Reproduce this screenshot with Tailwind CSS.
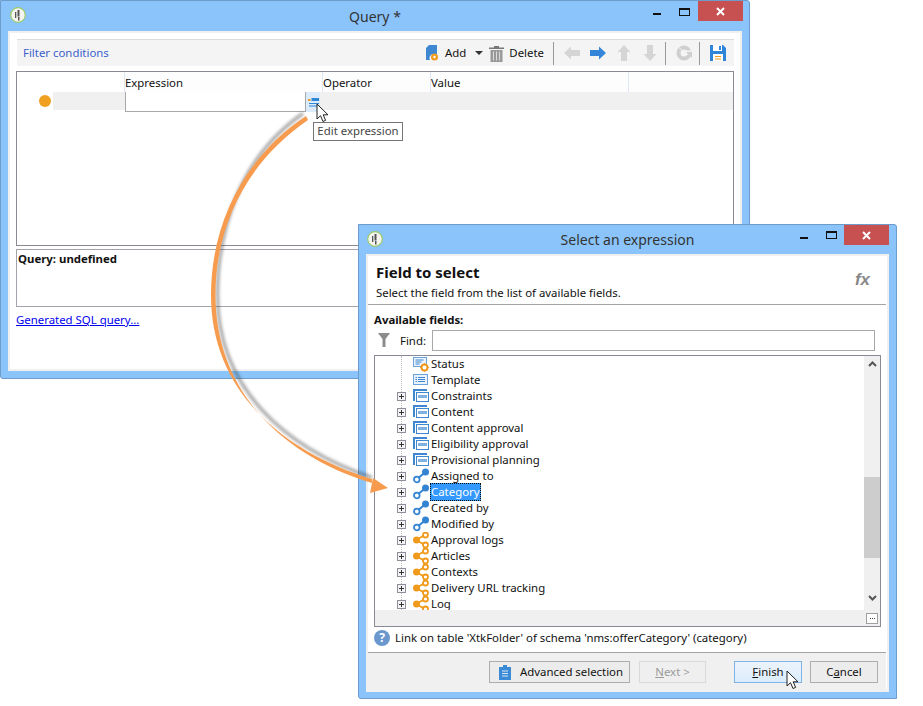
<!DOCTYPE html>
<html lang="en">
<head>
    <meta charset="UTF-8">
    <script src="https://cdn.jsdelivr.net/npm/@tailwindcss/browser@4"></script>
    <title>Query</title>
</head>
<body>
    <svg class="hidden">
        <symbol id="app" viewBox="0 0 16 16">
            <circle cx="8" cy="8" r="7.300" fill="#f4f4f0" stroke="#9ccb6a" stroke-width="1.200"/>
            <path d="M7.500 3h2v6.500h-2zM5 5h1.300v6H5zM8 10h1.500v3.500H8z" fill="#555"/>
        </symbol>
        <symbol id="cursor" viewBox="0 0 13 20">
            <path d="M1 1v15l3.500-3.300L7 18.500l2.600-1.100L7.200 11.800H12z" fill="#fff" stroke="#222" stroke-width="1"/>
        </symbol>
        <symbol id="plus" viewBox="0 0 9 9">
            <rect x=".5" y=".5" width="8" height="8" fill="#f3f3f6" stroke="#8e8f9a"/>
            <path d="M2 4.500h5M4.500 2v5" stroke="#333" fill="none"/>
        </symbol>
        <symbol id="node" viewBox="0 0 16 16">
            <path d="M1 13V2h13" fill="none" stroke="#3f87d0" stroke-width="2"/>
            <rect x="3.500" y="4.500" width="12" height="9" fill="#fff" stroke="#3f87d0"/>
            <rect x="5" y="7" width="9" height="3" fill="#7fb0e2"/>
        </symbol>
        <symbol id="list" viewBox="0 0 16 16">
            <rect x=".5" y="2.500" width="14" height="10" fill="#eaf3fc" stroke="#6ba4dc"/>
            <path d="M2.500 5.500h1.500M5 5.500h7M2.500 7.500h1.500M5 7.500h7M2.500 9.500h1.500M5 9.500h7" stroke="#3f87d0"/>
        </symbol>
        <symbol id="status" viewBox="0 0 16 16">
            <rect x=".5" y="1.500" width="13" height="9" fill="#eaf3fc" stroke="#6ba4dc"/>
            <path d="M2.500 4h8M2.500 6h6M2.500 8h4" stroke="#3f87d0"/>
            <circle cx="11.500" cy="11.500" r="3" fill="#fff" stroke="#ef9a1c" stroke-width="2"/>
            <path d="M11.500 7v2M11.500 14v2M7 11.500h2M14 11.500h2" stroke="#ef9a1c"/>
        </symbol>
        <symbol id="link" viewBox="0 0 16 16">
            <path d="M4 11 12 4.500" stroke="#3483d2" stroke-width="2"/>
            <circle cx="3.800" cy="11.500" r="2.800" fill="#fff" stroke="#3483d2" stroke-width="1.800"/>
            <circle cx="12.500" cy="4" r="3.500" fill="#3483d2"/>
        </symbol>
        <symbol id="coll" viewBox="0 0 16 16">
            <path d="M3 8 12 3M3 8l9 5" stroke="#ef9a1c" stroke-width="2"/>
            <circle cx="3.500" cy="8" r="3.500" fill="#ef9a1c"/>
            <circle cx="12.500" cy="3" r="2.500" fill="#fff" stroke="#ef9a1c" stroke-width="1.800"/>
            <circle cx="12.500" cy="13" r="2.500" fill="#fff" stroke="#ef9a1c" stroke-width="1.800"/>
        </symbol>
        <symbol id="arrow-l" viewBox="0 0 16 16"><path d="M0 8 7 1.500V5h9v6H7v3.500z"/></symbol>
        <symbol id="arrow-u" viewBox="0 0 16 16"><path d="M8 0l6.500 7H11v9H5V7H1.500z"/></symbol>
    </svg>

    <div class="relative w-[923px] h-[706px] bg-white overflow-hidden text-[11.4px] text-[#111]" style="font-family:'Noto Sans',sans-serif">

        <!-- query window -->
        <div class="absolute left-0 top-0 w-[750px] h-[379px] flex flex-col bg-[#8ac4fa] border border-[#6d9ccb] rounded-tr-[3px] rounded-bl-[3px] px-[7px] pb-[7px]">
            <div class="h-[30px] shrink-0 grid grid-cols-[1fr_auto_1fr]">
                <div class="pl-[2px] pt-[6px]"><svg class="w-4 h-4"><use href="#app"/></svg></div>
                <div class="text-[14px] leading-[31px] text-[#333]">Query *</div>
                <div class="flex justify-end items-start">
                    <div class="w-2 h-[2px] bg-[#111] mt-[12px]"></div>
                    <div class="w-[11px] h-[8px] border border-t-2 border-[#111] ml-[18px] mt-[7px]"></div>
                    <div class="w-[45px] h-[20px] bg-[#c75050] ml-[8px] mr-[-1px] flex items-center justify-center">
                        <svg class="w-[9px] h-[9px]" viewBox="0 0 9 9"><path d="M1 1l7 7M8 1 1 8" stroke="#fff" stroke-width="2"/></svg>
                    </div>
                </div>
            </div>
            <div class="flex-1 bg-white border-2 border-[#f0f0f0] px-[6px] pt-[6px]">
                <div class="h-[27px] ml-px bg-[#f4f4f4] border-t border-[#dcdcdc] flex items-center pl-[6px]">
                    <span class="text-[#3a5fcd]">Filter conditions</span>
                    <svg class="w-[14px] h-[18px] ml-auto" viewBox="0 0 14 18">
                        <path d="M4 1h8v9H8a4 4 0 0 0-3 6H1V4z" fill="#3f87d0"/>
                        <circle cx="9.500" cy="13" r="3.500" fill="#f09a1f"/><circle cx="9.500" cy="13" r="1.200" fill="#fff"/>
                    </svg>
                    <span class="ml-[6px]">Add</span>
                    <div class="ml-[9px] border-x-[4px] border-x-transparent border-t-[4px] border-t-[#333]"></div>
                    <svg class="w-[15px] h-[17px] ml-[6px]" viewBox="0 0 15 17">
                        <path d="M0 2.500h15v1.500H0zM5 1h5v1.500H5z" fill="#777"/>
                        <path d="M1.500 5h12v12h-12z" fill="#999"/>
                        <path d="M4.500 6.500V15.500M7.500 6.500V15.500M10.500 6.500V15.500" stroke="#ddd"/>
                    </svg>
                    <span class="ml-[5px]">Delete</span>
                    <div class="w-px h-[23px] bg-[#999] ml-[9px]"></div>
                    <svg class="w-4 h-4 ml-[10px] fill-[#d5d5d5]"><use href="#arrow-l"/></svg>
                    <svg class="w-4 h-4 ml-[10px] fill-[#3586d8] rotate-180"><use href="#arrow-l"/></svg>
                    <svg class="w-4 h-4 ml-[10px] fill-[#d5d5d5]"><use href="#arrow-u"/></svg>
                    <svg class="w-4 h-4 ml-[10px] fill-[#d5d5d5] rotate-180"><use href="#arrow-u"/></svg>
                    <div class="w-px h-[23px] bg-[#999] ml-[7px]"></div>
                    <svg class="w-4 h-4 ml-[10px]" viewBox="0 0 16 16">
                        <circle cx="8" cy="8" r="5.500" fill="none" stroke="#cfcfcf" stroke-width="4"/>
                        <path d="M3 2.500l3 3M8 6h8v3H8z" stroke="#f4f4f4" fill="#f4f4f4"/><path d="M10 7h6v6z" fill="#cfcfcf"/>
                    </svg>
                    <div class="w-px h-[23px] bg-[#999] ml-[7px]"></div>
                    <svg class="w-4 h-4 ml-[10px] mr-[8px]" viewBox="0 0 16 16">
                        <path d="M0 0h13l3 3v13H0z" fill="#2f86d9"/>
                        <path d="M3 0h9v6H3z" fill="#fff"/><path d="M9 1h2v4H9z" fill="#2f86d9"/>
                        <path d="M3 9h10v7H3z" fill="#fff"/><path d="M5 11h6v1H5zM5 13.500h6v1H5z" fill="#f09a1f"/>
                    </svg>
                </div>
                <div class="h-[175px] mt-[5px] border border-[#8a8a94]">
                    <div class="h-[20px] flex leading-[22px]">
                        <div class="w-[107px]"></div>
                        <div class="w-[198px] border-l border-[#dfe8f5] bg-[#fdfdfd]">Expression</div>
                        <div class="w-[108px] border-l border-[#dfe8f5] bg-[#fdfdfd]">Operator</div>
                        <div class="w-[198px] border-l border-[#dfe8f5] bg-[#fdfdfd]">Value</div>
                        <div class="flex-1 border-l border-[#dfe8f5] bg-[#fdfdfd]"></div>
                    </div>
                    <div class="h-[18px] flex">
                        <div class="w-[36px] flex justify-end items-center pr-[2px]"><div class="w-3 h-3 rounded-full bg-[#f0a020]"></div></div>
                        <div class="flex-1 bg-[#f0f0f0] flex items-start pl-[72px]">
                            <div class="w-[181px] h-[20px] bg-white border border-[#a8a8a8] border-t-0"></div>
                            <div class="w-[14px] h-[20px] bg-[#dcebfb] flex justify-center items-center">
                                <svg class="w-[11px] h-[9px]" viewBox="0 0 11 9"><path d="M0 1h2.500v2H0z" fill="#f09a1f"/><path d="M3.500 0H11v3H3.500z" fill="#2f86d9"/><path d="M1 5h10v1H1zM1 7.500h10v1H1z" fill="#2f86d9"/></svg>
                            </div>
                        </div>
                    </div>
                </div>
                <div class="h-[58px] mt-[3px] border border-[#a3a3ab] px-px pt-px font-bold leading-[16px]">Query: undefined</div>
                <div class="mt-[5px] leading-[16px] text-[#0000ee] underline">Generated SQL query...</div>
            </div>
            <div class="absolute left-[312px] top-[121px] w-[90px] h-[19px] bg-white border border-[#767676] text-center leading-[16px] text-[#444]">Edit expression</div>
        </div>

        <!-- expression window -->
        <div class="absolute left-[358px] top-[224px] w-[539px] h-[475px] flex flex-col bg-[#8ac4fa] border border-[#6d9ccb] rounded-tr-[3px] rounded-bl-[3px] px-[7px] pb-[6px]">
            <div class="h-[29px] shrink-0 grid grid-cols-[1fr_auto_1fr]">
                <div class="pl-[1px] pt-[6px]"><svg class="w-4 h-4"><use href="#app"/></svg></div>
                <div class="text-[14px] leading-[30px] text-[#333]">Select an expression</div>
                <div class="flex justify-end items-start">
                    <div class="w-2 h-[2px] bg-[#111] mt-[12px]"></div>
                    <div class="w-[11px] h-[8px] border border-t-2 border-[#111] ml-[18px] mt-[6px]"></div>
                    <div class="w-[45px] h-[20px] bg-[#c75050] ml-[7px] flex items-center justify-center">
                        <svg class="w-[9px] h-[9px]" viewBox="0 0 9 9"><path d="M1 1l7 7M8 1 1 8" stroke="#fff" stroke-width="2"/></svg>
                    </div>
                </div>
            </div>
            <div class="flex-1 flex flex-col bg-white border-2 border-[#f0f0f0]">
                <div class="h-[49px] shrink-0 border-b border-[#a3a3a8] mr-px flex justify-between pl-[8px] pr-[16px]">
                    <div>
                        <div class="text-[15px] font-bold leading-[20px] pt-[6px] h-[26px]">Field to select</div>
                        <div class="leading-[16px] mt-[3px]">Select the field from the list of available fields.</div>
                    </div>
                    <div class="text-[17px] italic font-bold text-[#888] mt-[11px]" style="font-family:'Liberation Sans',sans-serif">fx</div>
                </div>
                <div class="flex-1 px-[6px]">
                    <div class="font-bold leading-[16px] mt-[7px]">Available fields:</div>
                    <div class="h-[21px] mt-[2px] flex items-center mr-[6px]">
                        <svg class="w-3 h-[14px] ml-[4px] -mt-[2px]" viewBox="0 0 12 14"><path d="M0 0h12L7.500 6v8h-3V6z" fill="#8c8c8c"/></svg>
                        <span class="ml-[10px]">Find:</span>
                        <div class="ml-auto w-[443px] h-[21px] border border-[#a8a8a8]"></div>
                    </div>
                    <div class="h-[272px] mt-[4px] border border-[#8a8a94] flex flex-col">
                        <div class="h-[254px] flex">
                            <div class="flex-1 overflow-hidden relative">
                                <div class="absolute left-[26px] top-0 h-full border-l border-dotted border-[#bbb]"></div>
                                <div class="relative">
                                    <div class="h-4 flex items-center pl-[38px]"><svg class="w-4 h-4"><use href="#status"/></svg><span class="ml-[2px]">Status</span></div>
                                    <div class="h-4 flex items-center pl-[38px]"><svg class="w-4 h-4"><use href="#list"/></svg><span class="ml-[2px]">Template</span></div>
                                    <div class="h-4 flex items-center pl-[22px]"><svg class="w-[9px] h-[9px] mr-[7px]"><use href="#plus"/></svg><svg class="w-4 h-4"><use href="#node"/></svg><span class="ml-[2px]">Constraints</span></div>
                                    <div class="h-4 flex items-center pl-[22px]"><svg class="w-[9px] h-[9px] mr-[7px]"><use href="#plus"/></svg><svg class="w-4 h-4"><use href="#node"/></svg><span class="ml-[2px]">Content</span></div>
                                    <div class="h-4 flex items-center pl-[22px]"><svg class="w-[9px] h-[9px] mr-[7px]"><use href="#plus"/></svg><svg class="w-4 h-4"><use href="#node"/></svg><span class="ml-[2px]">Content approval</span></div>
                                    <div class="h-4 flex items-center pl-[22px]"><svg class="w-[9px] h-[9px] mr-[7px]"><use href="#plus"/></svg><svg class="w-4 h-4"><use href="#node"/></svg><span class="ml-[2px]">Eligibility approval</span></div>
                                    <div class="h-4 flex items-center pl-[22px]"><svg class="w-[9px] h-[9px] mr-[7px]"><use href="#plus"/></svg><svg class="w-4 h-4"><use href="#node"/></svg><span class="ml-[2px]">Provisional planning</span></div>
                                    <div class="h-4 flex items-center pl-[22px]"><svg class="w-[9px] h-[9px] mr-[7px]"><use href="#plus"/></svg><svg class="w-4 h-4"><use href="#link"/></svg><span class="ml-[2px]">Assigned to</span></div>
                                    <div class="h-4 flex items-center pl-[22px]"><svg class="w-[9px] h-[9px] mr-[7px]"><use href="#plus"/></svg><svg class="w-4 h-4"><use href="#link"/></svg><span class="ml-px px-px bg-[#3399ff] text-white outline outline-1 outline-dotted outline-[#111] -outline-offset-1">Category</span></div>
                                    <div class="h-4 flex items-center pl-[22px]"><svg class="w-[9px] h-[9px] mr-[7px]"><use href="#plus"/></svg><svg class="w-4 h-4"><use href="#link"/></svg><span class="ml-[2px]">Created by</span></div>
                                    <div class="h-4 flex items-center pl-[22px]"><svg class="w-[9px] h-[9px] mr-[7px]"><use href="#plus"/></svg><svg class="w-4 h-4"><use href="#link"/></svg><span class="ml-[2px]">Modified by</span></div>
                                    <div class="h-4 flex items-center pl-[22px]"><svg class="w-[9px] h-[9px] mr-[7px]"><use href="#plus"/></svg><svg class="w-4 h-4"><use href="#coll"/></svg><span class="ml-[2px]">Approval logs</span></div>
                                    <div class="h-4 flex items-center pl-[22px]"><svg class="w-[9px] h-[9px] mr-[7px]"><use href="#plus"/></svg><svg class="w-4 h-4"><use href="#coll"/></svg><span class="ml-[2px]">Articles</span></div>
                                    <div class="h-4 flex items-center pl-[22px]"><svg class="w-[9px] h-[9px] mr-[7px]"><use href="#plus"/></svg><svg class="w-4 h-4"><use href="#coll"/></svg><span class="ml-[2px]">Contexts</span></div>
                                    <div class="h-4 flex items-center pl-[22px]"><svg class="w-[9px] h-[9px] mr-[7px]"><use href="#plus"/></svg><svg class="w-4 h-4"><use href="#coll"/></svg><span class="ml-[2px]">Delivery URL tracking</span></div>
                                    <div class="h-4 flex items-center pl-[22px]"><svg class="w-[9px] h-[9px] mr-[7px]"><use href="#plus"/></svg><svg class="w-4 h-4"><use href="#coll"/></svg><span class="ml-[2px]">Log</span></div>
                                </div>
                            </div>
                            <div class="w-4 bg-[#f0f0f0] flex flex-col items-center">
                                <svg class="w-[9px] h-[6px] mt-[5px]" viewBox="0 0 9 6"><path d="M1 5l3.500-3.500L8 5" fill="none" stroke="#555" stroke-width="2"/></svg>
                                <div class="w-4 h-[81px] bg-[#cdcdcd] mt-[110px]"></div>
                                <svg class="w-[9px] h-[6px] mt-[37px]" viewBox="0 0 9 6"><path d="M1 1l3.500 3.500L8 1" fill="none" stroke="#555" stroke-width="2"/></svg>
                            </div>
                        </div>
                        <div class="flex-1 bg-[#f0f0f0] flex justify-end items-center pr-[2px]">
                            <div class="w-[12px] h-[11px] border border-[#a0a0a0] bg-white flex items-center justify-center gap-px">
                                <div class="w-px h-px bg-[#444]"></div><div class="w-px h-px bg-[#444]"></div><div class="w-px h-px bg-[#444]"></div>
                            </div>
                        </div>
                    </div>
                    <div class="h-[16px] mt-[3px] flex items-center">
                        <div class="w-4 h-4 rounded-full bg-[#6b98cc] text-white font-bold text-[12px] leading-[16px] text-center">?</div>
                        <span class="ml-[5px]">Link on table 'XtkFolder' of schema 'nms:offerCategory' (category)</span>
                    </div>
                </div>
                <div class="h-[38px] shrink-0 mr-px border-t border-[#a3a3a8] bg-[#f0f0f0] flex items-start pt-[8px] pl-[121px]">
                    <div class="w-[141px] h-[22px] border border-[#adadad] bg-[#ececec] flex items-center pl-[9px]">
                        <svg class="w-3 h-[15px]" viewBox="0 0 12 15"><path d="M0 2h12v13H0z" fill="#3a8ad6"/><path d="M4 0h4v3H4z" fill="#3a8ad6"/><path d="M3 6h6M3 8.500h6M3 11h6" stroke="#d7e8f8"/></svg>
                        <span class="ml-[9px]">Advanced selection</span>
                    </div>
                    <div class="w-[67px] h-[22px] ml-[9px] border border-[#d9d9d9] bg-[#efefef] text-center leading-[20px] text-[#9a9a9a]"><u>N</u>ext &gt;</div>
                    <div class="w-[68px] h-[22px] ml-[28px] border border-[#7eb4ea] bg-gradient-to-b from-[#ecf4fc] to-[#dcecfc] text-center leading-[20px]"><u>F</u>inish</div>
                    <div class="w-[68px] h-[22px] ml-[8px] border border-[#adadad] bg-[#ececec] text-center leading-[20px]">C<u>a</u>ncel</div>
                </div>
            </div>
        </div>

        <!-- callout arrow over both windows -->
        <svg class="absolute left-0 top-0 w-[923px] h-[706px]" viewBox="0 0 923 706">
            <path class="blur-[1.500px]" d="M303 113.500C243 155 217.500 225 217.500 295C217.500 388 285 448 372 477.500" fill="none" stroke="#444" stroke-opacity=".45" stroke-width="3.500"/>
            <path d="M306 116C243 158 211 225 211 295C211 392 284 452 372 479L372 483C283 456 215.500 392 215.500 295C215.500 225 247 162 308 120Z" fill="#f79c4e"/>
            <path d="M373 478 388 488 370 493Z" fill="#f79c4e"/>
        </svg>

        <svg class="absolute left-[316px] top-[103px] w-[13px] h-[20px]"><use href="#cursor"/></svg>
        <svg class="absolute left-[786px] top-[670px] w-[13px] h-[20px]"><use href="#cursor"/></svg>
    </div>
</body>
</html>
